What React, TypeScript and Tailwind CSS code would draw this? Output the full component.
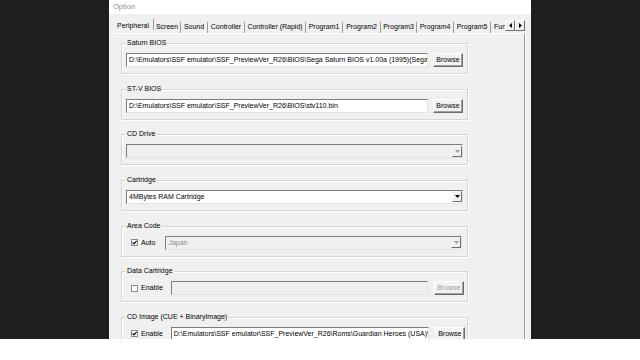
import React from "react";

const FONT = "font-['Liberation_Sans',Arial,sans-serif]";

function Group({ label, children }: { label: string; children: React.ReactNode }) {
  return (
    <div className="relative h-[31px] shrink-0 border border-[#d5d5d5] shadow-[inset_1px_1px_0_#ffffff,1px_1px_0_#ffffff]">
      <span className="absolute left-[4px] top-[-6px] bg-[#f0f0f0] px-[1px] text-[7px] leading-[10px] text-black">{label}</span>
      <div className="flex items-center pl-[4px] pt-[9px]">{children}</div>
    </div>
  );
}

function TextBox({ w, text, disabled }: { w: string; text?: string; disabled?: boolean }) {
  return (
    <div
      className={
        "h-[14px] flex items-center overflow-hidden whitespace-nowrap border border-t-[#7c7c7c] border-l-[#7c7c7c] border-r-[#e3e3e3] border-b-[#e3e3e3] pl-[2px] text-[7px] leading-[10px] text-black " +
        (disabled ? "bg-[#f0f0f0] " : "bg-white ") +
        w
      }
    >
      {text}
    </div>
  );
}

function Browse({ disabled, ml }: { disabled?: boolean; ml: string }) {
  return (
    <div
      className={
        "h-[14px] w-[30px] shrink-0 flex items-center justify-center border border-t-[#ffffff] border-l-[#ffffff] border-r-[#6b6b6b] border-b-[#6b6b6b] bg-[#f2f2f2] text-[7px] leading-[10px] shadow-[inset_-1px_-1px_0_#a0a0a0] " +
        (disabled ? "text-[#a0a0a0] " : "text-black ") +
        ml
      }
    >
      Browse
    </div>
  );
}

function Combo({ w, text, disabled }: { w: string; text?: string; disabled?: boolean }) {
  return (
    <div
      className={
        "h-[14px] flex items-center justify-between overflow-hidden whitespace-nowrap border border-t-[#7c7c7c] border-l-[#7c7c7c] border-r-[#e3e3e3] border-b-[#e3e3e3] pl-[2px] text-[7px] leading-[10px] " +
        (disabled ? "bg-[#f0f0f0] text-[#8c8c8c] " : "bg-white text-black ") +
        w
      }
    >
      <span>{text}</span>
      <div className="h-[11px] w-[10px] flex items-center justify-center border border-t-[#f4f4f4] border-l-[#f4f4f4] border-r-[#6b6b6b] border-b-[#6b6b6b] bg-[#f0f0f0]">
        <svg width="5" height="3" viewBox="0 0 5 3">
          <polygon points="0,0 5,0 2.5,3" fill={disabled ? "#a0a0a0" : "#000000"} />
        </svg>
      </div>
    </div>
  );
}

function Check({ label, checked }: { label: string; checked: boolean }) {
  return (
    <div className="flex items-center ml-[5px]">
      <div className="h-[7px] w-[7px] flex items-center justify-center border border-[#8a8a8a] bg-white">
        {checked && (
          <svg width="5" height="5" viewBox="0 0 5 5">
            <polyline points="0.5,2.3 2,3.8 4.6,0.8" fill="none" stroke="#000" strokeWidth="1.2" />
          </svg>
        )}
      </div>
      <span className="ml-[3px] text-[7px] leading-[10px] text-black">{label}</span>
    </div>
  );
}

const tabs: { label: string; w: string }[] = [
  { label: "Peripheral", w: "w-[41px]" },
  { label: "Screen", w: "w-[27px]" },
  { label: "Sound", w: "w-[27px]" },
  { label: "Controller", w: "w-[37px]" },
  { label: "Controller (Rapid)", w: "w-[61px]" },
  { label: "Program1", w: "w-[37px]" },
  { label: "Program2", w: "w-[38px]" },
  { label: "Program3", w: "w-[36px]" },
  { label: "Program4", w: "w-[37px]" },
  { label: "Program5", w: "w-[37px]" },
];

export default function App() {
  return (
    <div className={"w-[640px] h-[360px] bg-white " + FONT}>
      <div className="h-[339px] flex bg-[#1e1e1e] overflow-hidden">
        <div className="w-[109px] shrink-0" />
        <div className="w-[422px] shrink-0 flex flex-col bg-[#f0f0f0] overflow-hidden">
          <div className="h-[14px] shrink-0 bg-white flex items-center pl-[4px] text-[7.5px] leading-[10px] text-[#8f8f8f]">Option</div>
          <div className="h-[5px] shrink-0" />
          <div className="h-[14px] shrink-0 flex items-end pl-[4px] pr-[5px]">
            {tabs.map((t, i) => (
              <div
                key={t.label}
                className={
                  "h-[11px] shrink-0 flex items-start justify-center whitespace-nowrap border-r border-r-[#9a9a9a] text-[7px] leading-[9px] text-black " +
                  (i === 0 ? "self-stretch pt-[2px] " : "") +
                  t.w
                }
              >
                {t.label}
              </div>
            ))}
            <div className="h-[11px] flex-1 overflow-hidden whitespace-nowrap pl-[3px] text-[7px] leading-[9px] text-black">Fun</div>
            <div className="flex shrink-0 self-start mt-[1px] mr-[1px]">
              <div className="h-[11px] w-[10px] flex items-center justify-center border border-t-[#ffffff] border-l-[#ffffff] border-r-[#6b6b6b] border-b-[#6b6b6b] bg-[#f0f0f0]">
                <svg width="3" height="5" viewBox="0 0 3 5"><polygon points="3,0 3,5 0,2.5" fill="#000" /></svg>
              </div>
              <div className="h-[11px] w-[10px] flex items-center justify-center border border-t-[#ffffff] border-l-[#ffffff] border-r-[#6b6b6b] border-b-[#6b6b6b] bg-[#f0f0f0]">
                <svg width="3" height="5" viewBox="0 0 3 5"><polygon points="0,0 0,5 3,2.5" fill="#000" /></svg>
              </div>
            </div>
          </div>
          <div className="flex-1 min-h-0 flex">
            <div className="w-[4px] shrink-0" />
            <div className="w-[412px] shrink-0 border-t border-t-[#ffffff] border-r border-r-[#9a9a9a] shadow-[1px_0_0_#ffffff] pl-[8px] pt-[9px] overflow-hidden">
              <div className="w-[347px] flex flex-col gap-[14.67px]">
                <Group label="Saturn BIOS">
                  <TextBox w="w-[302px]" text="D:\Emulators\SSF emulator\SSF_PreviewVer_R26\BIOS\Sega Saturn BIOS v1.00a (1995)(Sega)(JP)(EU).bin" />
                  <Browse ml="ml-[5px]" />
                </Group>
                <Group label="ST-V BIOS">
                  <TextBox w="w-[302px]" text="D:\Emulators\SSF emulator\SSF_PreviewVer_R26\BIOS\stv110.bin" />
                  <Browse ml="ml-[5px]" />
                </Group>
                <Group label="CD Drive">
                  <Combo w="w-[337px]" disabled />
                </Group>
                <Group label="Cartridge">
                  <Combo w="w-[337px]" text="4MBytes RAM Cartridge" />
                </Group>
                <Group label="Area Code">
                  <Check label="Auto" checked />
                  <div className="ml-[10px]">
                    <Combo w="w-[297px]" text="Japan" disabled />
                  </div>
                </Group>
                <Group label="Data Cartridge">
                  <Check label="Enable" checked={false} />
                  <div className="ml-[8px]">
                    <TextBox w="w-[257px]" disabled />
                  </div>
                  <Browse ml="ml-[6px]" disabled />
                </Group>
                <Group label="CD Image (CUE + BinaryImage)">
                  <Check label="Enable" checked />
                  <div className="ml-[8px]">
                    <TextBox w="w-[258px]" text="D:\Emulators\SSF emulator\SSF_PreviewVer_R26\Roms\Guardian Heroes (USA)\Guardian Heroes (USA).cue" />
                  </div>
                  <Browse ml="ml-[6px]" />
                </Group>
              </div>
            </div>
            <div className="flex-1" />
          </div>
        </div>
      </div>
    </div>
  );
}
